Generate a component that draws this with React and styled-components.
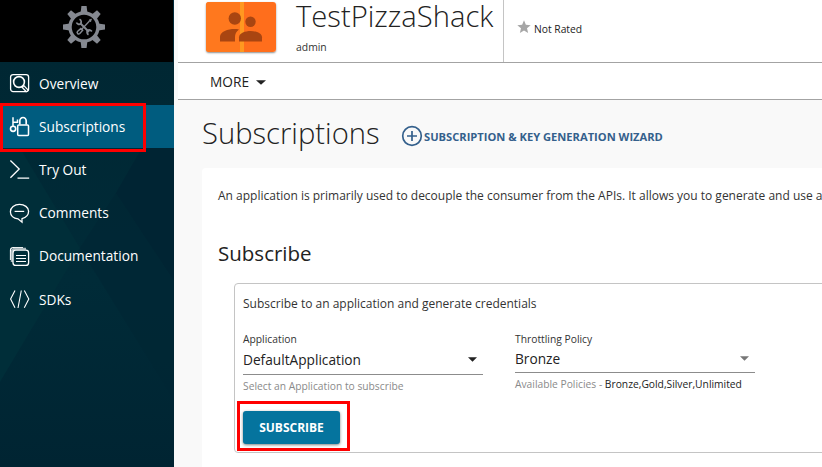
import React from "react";
import styled, { createGlobalStyle } from "styled-components";

const GlobalStyle = createGlobalStyle`
  *, *::before, *::after { box-sizing: border-box; }
  body { margin: 0; overflow: hidden; font-family: "Open Sans", sans-serif; background: #f9f9f9; color: #222; }
  svg { display: block; flex: none; }
`;

const Page = styled.div`
  display: flex;
  width: 822px;
  height: 467px;
  overflow: hidden;
`;

const Sidebar = styled.aside`
  position: relative;
  flex: none;
  width: 174px;
  height: 467px;
  background: #002733;
`;

const SidebarPattern = styled.svg`
  position: absolute;
  inset: 0;
`;

const LogoArea = styled.div`
  position: relative;
  width: 173px;
  height: 62px;
  padding: 6px 0 0 63px;
  background: #000;
`;

const Nav = styled.nav`
  position: relative;
  display: flex;
  flex-direction: column;
`;

const NavItem = styled.a`
  display: flex;
  align-items: center;
  height: 43.2px;
  padding-left: 9px;
  gap: 9px;
  font-size: 13.7px;
  line-height: 20px;
  color: #fff;
  background: ${(p) => (p.$active ? "#005c7f" : "transparent")};
`;

const Highlight = styled.div`
  position: absolute;
  left: ${(p) => p.$x}px;
  top: ${(p) => p.$y}px;
  width: ${(p) => p.$w}px;
  height: ${(p) => p.$h}px;
  border: 3px solid #ff0000;
`;

const Content = styled.main`
  flex: 1;
  min-width: 0;
  padding-left: 4px;
  background: #f9f9f9;
`;

const ApiHeader = styled.header`
  display: flex;
  height: 63px;
  background: #fff;
  border-bottom: 1px solid #a3a3a3;
`;

const Thumbnail = styled.div`
  width: 70px;
  height: 50px;
  margin: 2px 20px 0 28px;
  border-radius: 3px;
  overflow: hidden;
  box-shadow: 0 1px 2px rgba(0, 0, 0, 0.45);
`;

const ApiInfo = styled.div`
  width: 207px;
  height: 62px;
`;

const ApiName = styled.h1`
  margin: 0;
  font-size: 29.2px;
  font-weight: 300;
  line-height: 32px;
  white-space: nowrap;
`;

const Provider = styled.div`
  margin-top: 7px;
  font-size: 10.4px;
  line-height: 16px;
  color: #333;
`;

const Rating = styled.div`
  display: flex;
  align-items: flex-start;
  height: 62px;
  padding: 19px 0 0 12px;
  border-left: 1px solid #c4c4c4;
  font-size: 10.3px;
  line-height: 20px;
  gap: 2px;
`;

const MoreBar = styled.div`
  display: flex;
  align-items: center;
  gap: 7px;
  height: 37px;
  padding: 2px 0 0 32px;
  background: #fff;
  border-bottom: 1px solid #a3a3a3;
  font-size: 13.7px;
  line-height: 20px;
`;

const TitleRow = styled.div`
  display: flex;
  align-items: center;
  height: 68px;
  padding-left: 24px;
`;

const PageTitle = styled.h2`
  width: 199px;
  margin: 0;
  padding-bottom: 2px;
  font-size: 29.2px;
  font-weight: 300;
  line-height: 42px;
  white-space: nowrap;
`;

const WizardLink = styled.a`
  display: flex;
  align-items: center;
  gap: 1px;
  padding-top: 4px;
  font-size: 11.15px;
  font-weight: 700;
  line-height: 20px;
  color: #34608c;
  white-space: nowrap;
`;

const WizardLabel = styled.span`
  padding-top: 2px;
`;

const Paper = styled.section`
  margin-left: 24px;
  height: 299px;
  padding: 18px 0 0 16px;
  border-top-left-radius: 4px;
  background: #fff;
  overflow: hidden;
`;

const BodyText = styled.p`
  margin: 0;
  font-size: 12px;
  line-height: 20px;
  white-space: nowrap;
  color: #333;
`;

const SectionTitle = styled.h3`
  margin: 33px 0 0;
  font-size: 20.5px;
  font-weight: 400;
  line-height: 28px;
`;

const SubscribeCard = styled.div`
  width: 700px;
  height: 170px;
  margin: 16px 0 0 16px;
  padding: 10px 0 0 8px;
  border: 1px solid #c4c4c4;
  border-radius: 4px;
`;

const Fields = styled.div`
  display: flex;
  gap: 32px;
  margin-top: 17px;
`;

const Field = styled.div`
  width: 240px;
`;

const FieldLabel = styled.div`
  font-size: 10.3px;
  line-height: 16px;
  color: #333;
`;

const Select = styled.div`
  display: flex;
  align-items: center;
  justify-content: space-between;
  height: ${(p) => (p.$compact ? 26 : 28)}px;
  padding: 0 6px 2px 0;
  border-bottom: 1px solid #8c8c8c;
  font-size: 13.7px;
  line-height: 20px;
`;

const Helper = styled.div`
  margin-top: 3px;
  font-size: 10.28px;
  line-height: 16px;
  color: #8a8a8a;
  white-space: nowrap;
  span { color: #222; }
`;

const SubscribeButton = styled.button`
  display: block;
  width: 97px;
  height: 33px;
  margin: 17px 0 0;
  padding: 0;
  border: 0;
  border-radius: 3px;
  background: #05749e;
  box-shadow: 0 1px 3px rgba(0, 0, 0, 0.5);
  color: #fff;
  font: 700 12px/33px "Open Sans", sans-serif;
`;

const GearLogo = () => (
  <svg width="42" height="42" viewBox="-21 -21 42 42" fill="none" stroke="#858991">
    <circle r="14" strokeWidth="3.4" />
    <g fill="#858991" stroke="none">
      {[0, 45, 90, 135, 180, 225, 270, 315].map((a) => (
        <path key={a} d="M-2.6 -21H2.6L3.4 -14H-3.4Z" transform={`rotate(${a})`} />
      ))}
    </g>
    <path d="M-4 -4L5 5" strokeWidth="1.9" />
    <path d="M-7.5 -4.5A3 3 0 0 0 -3.5 -3A3 3 0 0 0 -4.5 -7.7M4.5 7.7A3 3 0 0 1 3.5 3.5A3 3 0 0 1 7.8 4.5" strokeWidth="1.7" />
    <path d="M-2.5 2.5L5.5 -6" strokeWidth="1.3" />
    <path d="M5 -7L7.5 -8L6.5 -5Z" fill="#858991" strokeWidth=".7" />
    <path d="M-6.3 4.2L-3.2 1.6L-1.4 3.4L-4.2 6.5A1.5 1.5 0 0 1 -6.3 4.2Z" strokeWidth="1.5" />
  </svg>
);

const icons = {
  overview: (
    <>
      <rect x="1.6" y="1.6" width="18" height="17" rx="2.5" strokeWidth="1.3" />
      <circle cx="10" cy="9" r="5.4" strokeWidth="1.6" />
      <path d="M13.5 13L18.5 18.2" strokeWidth="3.8" />
      <path d="M14.5 14L18 17.7" stroke="#002733" strokeWidth="1.1" />
    </>
  ),
  subscriptions: (
    <>
      <rect x="8.7" y="9" width="10.8" height="10.4" rx="1" strokeWidth="1.5" />
      <path d="M10.8 8.5V5A3.2 3.5 0 0 1 17.2 5V8.5" strokeWidth="1.7" />
      <circle cx="4.1" cy="12.8" r="2.6" strokeWidth="1.6" />
      <path d="M4 10.2V1.2M4 6.3H8.5V3.6" strokeWidth="1.5" />
    </>
  ),
  tryout: <path d="M1.4 1.5L10.2 10L1.4 18.8M8.5 19.1H20.2" strokeWidth="1.3" />,
  comments: (
    <>
      <path d="M13 15.7V19.2L9 15.8C4.3 15.3 1.4 12.4 1.4 8.8C1.4 4.6 5.5 1.4 10.5 1.4S19.6 4.4 19.6 8.3C19.6 12 17 14.5 13 15.7Z" strokeWidth="1.3" />
      <path d="M5.6 8.4H15.2" strokeWidth="1.2" />
    </>
  ),
  documentation: (
    <>
      <path d="M1.5 14V4.2A2.7 2.7 0 0 1 4.2 1.5H14" strokeWidth="1.2" />
      <path d="M2.8 16V5.8A3 3 0 0 1 5.8 2.8H17" stroke="#a8b6bb" strokeWidth="2" />
      <rect x="4" y="4.2" width="15.6" height="15.2" rx="2.7" strokeWidth="1.3" />
      <path d="M7 9.5H17M7 12.5H17M7 15.5H17" strokeWidth="1.1" />
    </>
  ),
  sdks: <path d="M6 1.5L1.6 10L6 18.8M12.3 1.5L9 19M15.3 1.5L19.8 10L15.3 18.8" strokeWidth="1.1" />,
};

const NavIcon = ({ name }) => (
  <svg width="21" height="21" viewBox="0 0 21 21" fill="none" stroke="#fff">
    {icons[name]}
  </svg>
);

const Caret = ({ color = "#222", w = 9 }) => (
  <svg width={w} height="5" viewBox="0 0 8 5" preserveAspectRatio="none">
    <path d="M0 .3H8L4 4.7Z" fill={color} />
  </svg>
);

const navItems = [
  ["overview", "Overview"],
  ["subscriptions", "Subscriptions"],
  ["tryout", "Try Out"],
  ["comments", "Comments"],
  ["documentation", "Documentation"],
  ["sdks", "SDKs"],
];

export default function App() {
  return (
    <>
      <GlobalStyle />
      <Page>
        <Sidebar>
          <SidebarPattern width="174" height="467">
            <defs>
              <linearGradient id="shade" x1="0" y1="0" x2="0" y2="1">
                <stop offset="0" stopColor="#00293a" />
                <stop offset=".13" stopColor="#002733" />
                <stop offset=".6" stopColor="#002b38" />
                <stop offset="1" stopColor="#002432" />
              </linearGradient>
            </defs>
            <rect width="174" height="467" fill="url(#shade)" />
            <path d="M20 148L80 248L0 382V148Z" fill="#002e39" />
            <path d="M142 148L116 193L174 281V148Z" fill="#002433" />
            <path d="M116 193L80 248L174 400V281Z" fill="#002735" opacity=".8" />
          </SidebarPattern>
          <LogoArea><GearLogo /></LogoArea>
          <Nav>
            {navItems.map(([icon, label]) => (
              <NavItem key={icon} $active={icon === "subscriptions"}>
                <NavIcon name={icon} />
                {label}
              </NavItem>
            ))}
          </Nav>
          <Highlight $x={0} $y={103} $w={146} $h={49} />
        </Sidebar>
        <Content>
          <ApiHeader>
            <Thumbnail>
              <svg width="70" height="50" viewBox="0 0 70 50">
                <rect width="70" height="50" fill="#ff6e1c" />
                <rect width="34" height="50" fill="#ff781e" />
                <rect x="34" width="4" height="50" fill="#ff9820" />
                <g fill="#a94511">
                  <circle cx="28.8" cy="16.5" r="6.2" />
                  <circle cx="44.5" cy="19.8" r="5.2" />
                  <path d="M14 39.5V35C14 29.5 22 27 28.5 27C30 27 31.5 27.1 33 27.4C30 29.5 29 32 29 35V39.5Z" />
                  <path d="M33 39.5V35.3C33 31 39.5 29 44.5 29S56 31 56 35.3V39.5Z" />
                </g>
              </svg>
            </Thumbnail>
            <ApiInfo>
              <ApiName>TestPizzaShack</ApiName>
              <Provider>admin</Provider>
            </ApiInfo>
            <Rating>
              <svg width="16" height="16" viewBox="0 0 24 24">
                <path fill="#a6a6a6" d="M12 17.3L18.2 21L16.5 14L22 9.2L14.8 8.6L12 2L9.2 8.6L2 9.2L7.5 14L5.8 21Z" />
              </svg>
              Not Rated
            </Rating>
          </ApiHeader>
          <MoreBar>MORE <Caret w={10} /></MoreBar>
          <TitleRow>
            <PageTitle>Subscriptions</PageTitle>
            <WizardLink>
              <svg width="22" height="22" viewBox="0 0 22 22" fill="none" stroke="#34608c">
                <circle cx="11" cy="11" r="9.3" strokeWidth="1.7" />
                <path d="M11 6V16M6 11H16" strokeWidth="1.7" />
              </svg>
              <WizardLabel>SUBSCRIPTION &amp; KEY GENERATION WIZARD</WizardLabel>
            </WizardLink>
          </TitleRow>
          <Paper>
            <BodyText>An application is primarily used to decouple the consumer from the APIs. It allows you to generate and use a</BodyText>
            <SectionTitle>Subscribe</SectionTitle>
            <SubscribeCard>
              <BodyText>Subscribe to an application and generate credentials</BodyText>
              <Fields>
                <Field>
                  <FieldLabel>Application</FieldLabel>
                  <Select>DefaultApplication <Caret /></Select>
                  <Helper>Select an Application to subscribe</Helper>
                </Field>
                <Field>
                  <FieldLabel>Throttling Policy</FieldLabel>
                  <Select $compact>Bronze <Caret color="#777" /></Select>
                  <Helper>Available Policies - <span>Bronze,Gold,Silver,Unlimited</span></Helper>
                </Field>
              </Fields>
              <SubscribeButton>SUBSCRIBE</SubscribeButton>
            </SubscribeCard>
          </Paper>
        </Content>
        <Highlight $x={237} $y={401} $w={113} $h={50} />
      </Page>
    </>
  );
}
